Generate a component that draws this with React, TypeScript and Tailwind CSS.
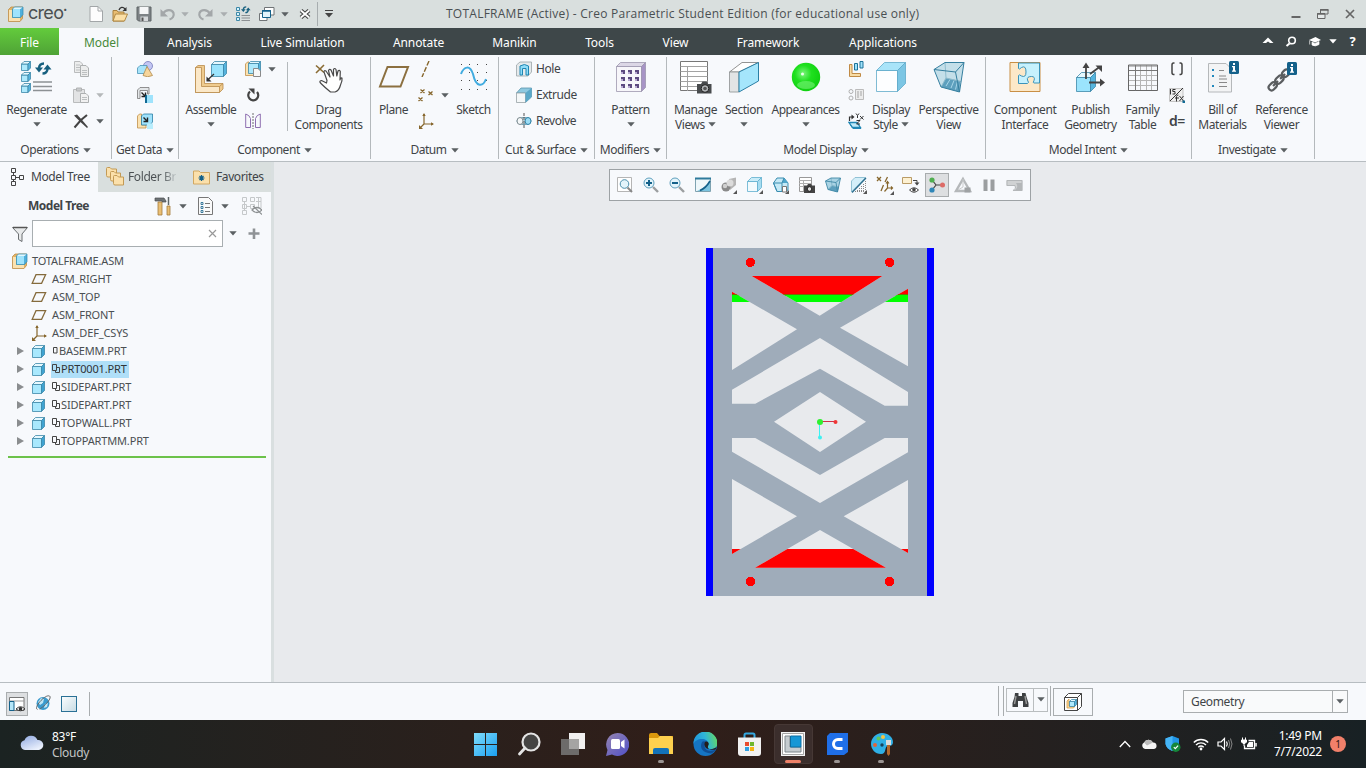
import React from "react";

type Kids = { children?: React.ReactNode };

/* ---------- drawing helpers ---------- */

function Ic({ w = 16, h, children }: { w?: number; h?: number } & Kids) {
  return (
    <svg className="block shrink-0" width={w} height={h ?? w} viewBox={`0 0 ${w} ${h ?? w}`} fill="none">
      {children}
    </svg>
  );
}

type CubeProps = { x?: number; y?: number; s?: number; d?: number; front?: string; top?: string; side?: string; line?: string };
function Cube({ x = 0, y = 0, s = 16, d, front = "#aee9fc", top = "#e6f8fe", side = "#55b4de", line = "#3c88a8" }: CubeProps) {
  const k = d ?? s * 0.25;
  const a = x + 0.5;
  const b = y + 0.5;
  const e = s - 1;
  return (
    <g stroke={line} strokeWidth="0.8" strokeLinejoin="round">
      <path d={`M${a} ${b + k}H${a + e - k}V${b + e}H${a}Z`} fill={front} />
      <path d={`M${a} ${b + k}L${a + k} ${b}H${a + e}L${a + e - k} ${b + k}Z`} fill={top} />
      <path d={`M${a + e - k} ${b + k}L${a + e} ${b}V${b + e - k}L${a + e - k} ${b + e}Z`} fill={side} />
    </g>
  );
}

function Caret({ c = "#5b6063" }: { c?: string }) {
  return (
    <svg className="block shrink-0" width="8" height="5" viewBox="0 0 8 5">
      <path d="M0.300 0.300H7.700L4 4.600Z" fill={c} />
    </svg>
  );
}

function Tick({ x = 13, y = 13 }: { x?: number; y?: number }) {
  return <path d={`M${x + 4} ${y}V${y + 4}H${x}Z`} fill="#555" />;
}

function AsmIcon() {
  return (
    <Ic>
      <path d="M0.500 3.500L3 1H14.500V12.500L12 15.500H0.500Z" fill="#e2b264" stroke="#c08f4a" strokeWidth="0.800" />
      <path d="M1 4H4V11.500H12V15H1Z" fill="#fbe2b0" />
      <path d="M4.500 3L6.500 1H15V8.500L12.500 11.500H4.500Z" fill="#4fb0dc" />
      <path d="M4.500 3H12V11.500H4.500Z" fill="#9fe3fc" />
      <path d="M4.500 3L6.500 1H15L12.500 3Z" fill="#e2f7fd" />
      <path d="M4.500 3L6.500 1H15V8.500L12.500 11.500H4.500Z" stroke="#2e86ad" strokeWidth="0.700" />
    </Ic>
  );
}

function Sync({ x = 0, y = 0, k = 1 }: { x?: number; y?: number; k?: number }) {
  return (
    <g transform={`translate(${x} ${y}) scale(${k})`}>
      <path d="M4 6.500C4 3 6 1.500 9 1.500" stroke="#17607f" strokeWidth="2.400" />
      <path d="M0 5.500H8L4 10.500Z" fill="#17607f" />
      <path d="M12.500 6.500C12.500 10 10.500 11.500 7.500 11.500" stroke="#17607f" strokeWidth="2.400" />
      <path d="M8.500 7.500H16.500L12.500 2.500Z" fill="#17607f" />
    </g>
  );
}

function InfoBadge({ x, y }: { x: number; y: number }) {
  return (
    <g>
      <rect x={x} y={y} width="10" height="13" rx="1.500" fill="#14618a" />
      <path d={`M${x + 4} ${y + 2}h2v2h-2zM${x + 3} ${y + 5}h3v4.500h1v1.200h-4v-1.200h1v-3.200h-1z`} fill="#fff" />
    </g>
  );
}

function Csys() {
  return (
    <Ic>
      <path d="M6 1V11H15M6 11L2 15" stroke="#86662c" strokeWidth="1.200" />
      <path d="M4.300 3L6 0L7.700 3ZM13 9.300L16 11L13 12.700ZM1 12V16H5Z" fill="#86662c" />
    </Ic>
  );
}

function PlaneSmall() {
  return (
    <Ic>
      <path d="M5 3.700H14.600L10.600 12.300H1.200Z" stroke="#856b3c" strokeWidth="1.300" />
    </Ic>
  );
}

function TurnArrow({ flip }: { flip?: boolean }) {
  return (
    <Ic>
      <g transform={flip ? "translate(16 0) scale(-1 1)" : undefined}>
        <path d="M3 7.500C6 3 12 3 13.500 7C14.500 10 12.500 12.500 9.500 13.500" stroke="#a3a7a9" strokeWidth="2.200" />
        <path d="M0.500 3V10.500H8Z" fill="#a3a7a9" />
      </g>
    </Ic>
  );
}

/* ---------- ribbon parts ---------- */

function Group({ cls, label, children }: { cls: string; label: string } & Kids) {
  return (
    <div className={`flex h-[106px] shrink-0 ${cls}`}>
      <div className="flex min-w-0 grow flex-col">
        <div className="flex h-[86px]">{children}</div>
        <div className="flex h-[18px] items-center justify-center gap-[4px] whitespace-nowrap">
          <span>{label}</span>
          <Caret />
        </div>
      </div>
      <div className="mt-[2px] h-[102px] w-px shrink-0 bg-[#b4b9bc]" />
    </div>
  );
}

function Big({ cls, lines, drop, icon }: { cls: string; lines: string[]; drop?: "below" | "inline"; icon: React.ReactNode }) {
  return (
    <div className={`flex shrink-0 flex-col items-center pt-[6px] ${cls}`}>
      <div className="flex h-[41px] items-start justify-center">{icon}</div>
      {lines.map((l, i) => (
        <div key={l} className="flex h-[15px] items-center gap-[3px] leading-[15px] whitespace-nowrap">
          <span>{l}</span>
          {drop === "inline" && i === lines.length - 1 && <Caret />}
        </div>
      ))}
      {drop === "below" && (
        <div className="flex h-[15px] items-center">
          <Caret />
        </div>
      )}
    </div>
  );
}

function Stack({ cls, children }: { cls: string } & Kids) {
  return <div className={`flex shrink-0 flex-col gap-[10px] pt-[6px] ${cls}`}>{children}</div>;
}

function Ribbon() {
  return (
    <div className="flex h-[107px] border-b border-[#b7bdc1] bg-[#f7f9fc]">
      <Group cls="w-[112px]" label="Operations">
        <Big
          cls="w-[73px]"
          lines={["Regenerate"]}
          drop="below"
          icon={
            <Ic w={32}>
              <Cube x={0} y={0} s={10} />
              <Cube x={0} y={11} s={10} />
              <Cube x={0} y={22} s={10} />
              <Sync x={14} y={1} />
              <path d="M12 21H31M12 25.500H31M12 29.500H31" stroke="#8d9194" strokeWidth="1.400" />
            </Ic>
          }
        />
        <Stack cls="w-[38px]">
          <Ic>
            <path d="M1.500 0.500H7L9.500 3V11.500H1.500Z" fill="#eceded" stroke="#b9bbbc" />
            <path d="M7.500 4.500H13L15.500 7V15.500H7.500Z" fill="#eceded" stroke="#adb0b1" />
            <path d="M3 4H7M3 6.500H7M3 9H7M9 9.500H14M9 11.500H14M9 13.500H14" stroke="#bcbfc0" />
          </Ic>
          <div className="flex items-center gap-[7px]">
            <Ic>
              <path d="M0.500 2.500H11.500V15.500H0.500Z" fill="#e2e3e4" stroke="#b9bbbc" />
              <path d="M3.500 1H8.500V4H3.500Z" fill="#c9cbcc" stroke="#b0b2b3" />
              <path d="M7.500 6.500H13L15.500 9V15.500H7.500Z" fill="#f1f1f1" stroke="#adb0b1" />
              <path d="M9 10.500H14M9 12.500H14" stroke="#bcbfc0" />
            </Ic>
            <Caret c="#b5b8ba" />
          </div>
          <div className="flex items-center gap-[7px]">
            <Ic>
              <path d="M1 2.500L4 1.500L9.500 7.500L15 14L14 15L8 9.500Z" fill="#444" />
              <path d="M14 2L8 7L1.500 14.500" stroke="#444" strokeWidth="2" />
            </Ic>
            <Caret />
          </div>
        </Stack>
      </Group>

      <Group cls="w-[67px]" label="Get Data">
        <Stack cls="w-[66px] items-center">
          <Ic>
            <circle cx="11" cy="5" r="4.500" fill="#c3c6f3" stroke="#8b8fc6" />
            <path d="M0.500 7L3 4.500H10V10L8 12.500H0.500Z" fill="#a8e4fa" stroke="#4a94b8" strokeWidth="0.800" />
            <path d="M10 5.500L6 14.500Q10.500 17 15.500 14.500Z" fill="#f6d59b" stroke="#b08a4d" strokeWidth="0.800" />
          </Ic>
          <Ic>
            <path d="M0.500 3L3 0.500H12V7H10.500V3.500H3V11.500H0.500Z" fill="#e3e6e8" stroke="#777" strokeWidth="0.800" />
            <path d="M4.500 5.500L8 9M8.500 5.500V9.500H4.500" stroke="#222" strokeWidth="1.400" />
            <path d="M10 8H16V16H10Z" fill="#9fe3fc" />
            <path d="M8 9L10 7.500V16H8Z" fill="#126a94" />
          </Ic>
          <Ic>
            <path d="M0.500 3L2.500 1H4.500V12H9V15H0.500Z" fill="#fbe2b0" stroke="#c08f4a" strokeWidth="0.800" />
            <path d="M4.500 3L6.500 1H15.500V9L13 12H4.500Z" fill="#9fe2fb" stroke="#2b7fa5" strokeWidth="0.800" />
            <path d="M6.500 4.500L10 8M10.500 4.500V8.500H6.500" stroke="#222" strokeWidth="1.400" />
            <path d="M10 10.500H16V16H10Z" fill="#b8edfc" />
          </Ic>
        </Stack>
      </Group>

      <Group cls="w-[192px]" label="Component">
        <Big
          cls="w-[64px]"
          lines={["Assemble"]}
          drop="below"
          icon={
            <Ic w={32}>
              <path d="M0.500 6.500L3 4.500H9.500V22.500H28V28L24.500 31.500H0.500Z" fill="#efcb8e" stroke="#b98c4b" strokeWidth="0.800" />
              <path d="M0.500 6.500H6.500V25.500H24.500V31.500H0.500Z" fill="#fbe8c8" stroke="#b98c4b" strokeWidth="0.800" />
              <path d="M24.500 25.500L28 22.500" stroke="#b98c4b" strokeWidth="0.800" />
              <Cube x={16} y={0} s={16} d={3} front="#9be4fd" />
              <path d="M19 13L12 19.500" stroke="#333" strokeWidth="1.200" />
              <path d="M11.500 15.500V20.500H16.500Z" fill="#333" />
            </Ic>
          }
        />
        <Stack cls="w-[44px] pl-[2px]">
          <div className="flex items-center gap-[7px]">
            <Ic>
              <path d="M0.500 3L2.500 1H4V11H9V14.500H0.500Z" fill="#fbe2b0" stroke="#c08f4a" strokeWidth="0.800" />
              <Cube x={3} y={0} s={13} d={2} />
              <path d="M8.500 7.500H13L15.500 10V15.500H8.500Z" fill="#f7f7f7" stroke="#8a8a8a" />
            </Ic>
            <Caret />
          </div>
          <Ic>
            <path d="M5 4.500A5 5 0 1 0 12 5" stroke="#444" strokeWidth="2.200" />
            <path d="M3.500 1.500H9.500V7.500Z" fill="#444" />
          </Ic>
          <Ic>
            <path d="M0.700 1V14.500H5.500V5.500Q4.500 2 0.700 1ZM15.300 1V14.500H10.500V5.500Q11.500 2 15.300 1Z" stroke="#8e6fb0" />
            <path d="M8 0V16" stroke="#6c6c6c" strokeDasharray="2 1" />
          </Ic>
        </Stack>
        <div className="mt-[7px] h-[69px] w-px bg-[#b4b9bc]" />
        <Big
          cls="w-[81px]"
          lines={["Drag", "Components"]}
          icon={
            <Ic w={32}>
              <path d="M3 4.500L11 11.500M11 4L3 12" stroke="#8a6c34" strokeWidth="1.600" />
              <path
                d="M11 11Q11 9 13 10L17 16L15.500 9.500Q16.500 7.500 18 9L20.500 15V8.500Q21.500 6.500 23 8.500L23.800 15L25 10Q26.500 8.500 27.300 10.500L27 19Q27.500 16.500 29 17Q29.500 20 27.500 24Q26 30 22 31H17.500Q12.500 27 8 22.500Q5.500 20 8.500 19.500L13.500 22L14 19.500Z"
                fill="#fff"
                stroke="#4a4a4a"
                strokeWidth="1.200"
                strokeLinejoin="round"
              />
            </Ic>
          }
        />
      </Group>

      <Group cls="w-[128px]" label="Datum">
        <Big
          cls="w-[45px]"
          lines={["Plane"]}
          icon={
            <Ic w={32}>
              <path d="M9.500 6H30L22.500 25.500H2Z" stroke="#8c7040" strokeWidth="2" />
            </Ic>
          }
        />
        <Stack cls="w-[37px] pl-[2px]">
          <Ic>
            <path d="M11 0L4 16" stroke="#86662c" strokeWidth="1.400" strokeDasharray="5 1.700" />
          </Ic>
          <div className="flex items-center gap-[7px]">
            <Ic>
              <path d="M2.500 2.500l4 3.500M6.500 2.500l-4 3.500M10.500 4.500l4 3.500M14.500 4.500l-4 3.500M0.500 10.500l4 3.500M4.500 10.500l-4 3.500" stroke="#86662c" strokeWidth="1.300" />
            </Ic>
            <Caret />
          </div>
          <Csys />
        </Stack>
        <Big
          cls="w-[41px]"
          lines={["Sketch"]}
          icon={
            <Ic w={32}>
              {[3, 11, 19, 28].map((y) =>
                [3, 11, 19, 28].map((x) => <rect key={`${x}-${y}`} x={x} y={y} width="1" height="1" fill="#444" />)
              )}
              <path d="M3 13C6 5 12 4 15 13C18 27 25 26 28 18" stroke="#41ace0" strokeWidth="2" />
            </Ic>
          }
        />
      </Group>

      <Group cls="w-[96px]" label="Cut & Surface">
        <div className="flex flex-col gap-[10px] pt-[6px] pl-[17px]">
          <div className="flex h-[16px] items-center gap-[4px]">
            <Ic>
              <path d="M0.500 4L4 1H15.500V11L12 15H0.500Z" fill="#e5eaec" stroke="#9aa4a8" strokeWidth="0.800" />
              <path d="M4 5V14H6.500V7.500H10V14H12.500V5Q8.500 2 4 5Z" fill="#8fdcf8" stroke="#1e86b3" />
            </Ic>
            <span>Hole</span>
          </div>
          <div className="flex h-[16px] items-center gap-[4px]">
            <Ic>
              <path d="M0.500 6L5 1H15.500V10L9.500 15.500V6Z" fill="#8ec9e0" stroke="#5b95ac" strokeWidth="0.800" />
              <path d="M0.500 6H9.500V15.500H0.500Z" fill="#f4f7f8" stroke="#98a2a6" strokeWidth="0.800" />
              <path d="M9.500 6L15.500 1V10L9.500 15.500Z" fill="#5aa8c8" />
            </Ic>
            <span>Extrude</span>
          </div>
          <div className="flex h-[16px] items-center gap-[4px]">
            <Ic>
              <ellipse cx="8" cy="8" rx="7" ry="3.500" fill="#d7edf5" stroke="#6c99ab" />
              <ellipse cx="4" cy="8" rx="3" ry="3.500" fill="#f4f7f8" stroke="#7d8b90" />
              <ellipse cx="12" cy="8" rx="3" ry="3.500" fill="#9bdcf4" stroke="#2b7fa5" />
              <path d="M8 0V16" stroke="#555" strokeDasharray="3 1" />
            </Ic>
            <span>Revolve</span>
          </div>
        </div>
      </Group>

      <Group cls="w-[72px]" label="Modifiers">
        <Big
          cls="w-[71px]"
          lines={["Pattern"]}
          drop="below"
          icon={
            <Ic w={32}>
              <Cube x={1} y={1} s={30} d={4} front="#f7f6fa" top="#dcd7e6" side="#a794c6" line="#9d97ae" />
              {[9, 16, 23].map((y) =>
                [6, 13, 20].map((x) => (
                  <g key={`${x}-${y}`}>
                    <rect x={x} y={y} width="4" height="4" fill="#5d4a80" />
                    <rect x={x} y={y + 2} width="2" height="2" fill="#b9abd2" />
                  </g>
                ))
              )}
            </Ic>
          }
        />
      </Group>

      <Group cls="w-[319px]" label="Model Display">
        <Big
          cls="w-[57px]"
          lines={["Manage", "Views"]}
          drop="inline"
          icon={
            <Ic w={34} h={34}>
              <path d="M1.500 0.500H28.500V29.500H1.500Z" fill="#fff" stroke="#777" />
              <path d="M1.500 5.500H28.500M1.500 10.500H28.500M1.500 15.500H28.500M1.500 20.500H28.500M1.500 25.500H28.500M8.500 5V30" stroke="#a3a3a3" />
              <path d="M18 23H22L23.500 20.500H27.500L29 23H32.500V32.500H18Z" fill="#484b4d" />
              <circle cx="26" cy="27.500" r="3.800" fill="#b5b8ba" stroke="#222" />
              <circle cx="26" cy="27.500" r="1.800" fill="#555" />
            </Ic>
          }
        />
        <Big
          cls="w-[40px]"
          lines={["Section"]}
          drop="below"
          icon={
            <Ic w={32}>
              <path d="M1.500 11L14 1.500H30.500L11 11Z" fill="#fff" stroke="#777" strokeWidth="0.800" />
              <path d="M1.500 11H11V31H1.500Z" fill="#e2e4e5" stroke="#8b8f91" strokeWidth="0.800" />
              <path d="M11 11L30.500 1.500V20L11 31Z" fill="#a5e6fc" stroke="#2b7fa5" />
            </Ic>
          }
        />
        <Big
          cls="w-[83px]"
          lines={["Appearances"]}
          drop="below"
          icon={
            <Ic w={32}>
              <defs>
                <radialGradient id="ball" cx="0.400" cy="0.380" r="0.650">
                  <stop offset="0" stopColor="#7bf57b" />
                  <stop offset="0.450" stopColor="#1fe01f" />
                  <stop offset="1" stopColor="#0fd00f" />
                </radialGradient>
              </defs>
              <circle cx="16" cy="16" r="14.200" fill="url(#ball)" />
              <ellipse cx="16" cy="24" rx="9" ry="4" fill="#8cf78c" opacity="0.500" />
              <circle cx="12.500" cy="13" r="1.500" fill="#eaffea" />
            </Ic>
          }
        />
        <Stack cls="w-[18px] pl-[1px]">
          <Ic>
            <path d="M1.500 3.500H4V12.500H12.500V15.500H1.500Z" fill="#f8dca5" stroke="#c08a45" />
            <path d="M6.500 2.500H9.500V9H6.500ZM12 0.500H15V7H12Z" fill="#9fe2fb" stroke="#1e7399" />
          </Ic>
          <Ic>
            <path d="M7.500 2.500H15.500V12.500H7.500Z" fill="#ececec" stroke="#bbb" />
            <path d="M9 4H11V11H9ZM12 4H14V9H12Z" fill="#c9c9c9" />
            <circle cx="3" cy="4.500" r="2" stroke="#b0b0b0" />
            <circle cx="3" cy="11" r="2" stroke="#b0b0b0" />
          </Ic>
          <Ic>
            <path d="M1 9.500H9L12.500 14.500H4.500Z" fill="#bfeafa" stroke="#2087b5" strokeWidth="1.300" />
            <path d="M2.500 12L5 15.500H13" stroke="#2087b5" />
            <path d="M1.500 8V4H4" stroke="#333" strokeWidth="1.200" />
            <path d="M3.500 1.500L6.500 4L3.500 6.500Z" fill="#333" />
            <path d="M8 0.500L9.500 2.500L11 0.500M9.500 2.500V5M12 3L15.500 6.500M15.500 3L12 6.500M8.500 7.500H12L8.500 11H12" stroke="#333" />
          </Ic>
        </Stack>
        <Big
          cls="w-[52px]"
          lines={["Display", "Style"]}
          drop="inline"
          icon={
            <Ic w={32}>
              <Cube x={1} y={1} s={30} d={8} front="#fdfeff" top="#a9e4f9" side="#7cc6e4" line="#5fa9c9" />
            </Ic>
          }
        />
        <Big
          cls="w-[63px]"
          lines={["Perspective", "View"]}
          icon={
            <Ic w={32}>
              <path d="M1 8.500L12 1.500H31L26.500 31L8 26Z" fill="#c4dfe9" />
              <path d="M8 26L13 17L27 20L26.500 31Z" fill="#5d9fbd" />
              <path d="M13 25L17 18.500M18 27L21 19.500M22.500 28.500L24.500 20" stroke="#a8d6e8" />
              <path d="M12 1.500L13 17L8 26M13 17L28 20.500" stroke="#8fbccd" />
              <path d="M1 8.500L12 1.500H31L26.500 31L8 26ZM1 8.500L22.500 11L31 1.500M22.500 11L26.500 31" stroke="#357f9f" />
            </Ic>
          }
        />
      </Group>

      <Group cls="w-[206px]" label="Model Intent">
        <Big
          cls="w-[78px]"
          lines={["Component", "Interface"]}
          icon={
            <Ic w={32}>
              <path d="M1 1.500H31V30.500H1Z" fill="#fce8c8" stroke="#c98f45" />
              <path
                d="M9.500 2H30.500V22H25Q23.500 22 25 19.500Q26.500 15.500 22.500 15.500Q17.500 15.500 18.500 19Q20.500 22 18.500 22.500H9.500V14.500Q10 13 12.500 15Q17 17 17 11Q17 4 12.500 6.500Q10 9 9.500 7.500Z"
                fill="#c6f1fd"
                stroke="#3a93ba"
              />
            </Ic>
          }
        />
        <Big
          cls="w-[53px]"
          lines={["Publish", "Geometry"]}
          icon={
            <Ic w={32}>
              <Cube x={1} y={11} s={20} d={5} front="#9be4fd" />
              <path d="M11 18V5M15 13L24.500 6M14 21.500H27" stroke="#444" strokeWidth="1.800" />
              <path d="M7.500 7L11 1.500L14.500 7ZM20.500 4.500H27V11ZM25 17.500L30 21.500L25 25.500Z" fill="#444" />
            </Ic>
          }
        />
        <Big
          cls="w-[51px]"
          lines={["Family", "Table"]}
          icon={
            <Ic w={32}>
              <path d="M2 14.500H30M2 19.500H30M2 24.500H30M13.500 4V29.500M19.500 4V29.500M24.500 4V29.500" stroke="#b5b5b5" />
              <path d="M1.500 4H30.500V29.500H1.500Z" stroke="#666" />
              <path d="M2 5H30" stroke="#888" />
              <path d="M2 9.500H30M8.500 4V29.500" stroke="#777" />
            </Ic>
          }
        />
        <Stack cls="w-[23px] pl-[1px]">
          <Ic>
            <path d="M5.500 2H4.500Q3 2 3 4V11.500Q3 13.500 4.500 13.500H5.500M10.500 2H11.500Q13 2 13 4V11.500Q13 13.500 11.500 13.500H10.500" stroke="#444" strokeWidth="1.500" />
          </Ic>
          <Ic>
            <path d="M0.500 1.500H14V14.500H0.500Z" fill="#eee" stroke="#c5c5c5" />
            <path d="M1.500 2V7.500M6.500 2.500H3.800V4.500H6V7H3.500M14 1L1 14M7.500 14.500V9.500Q7.500 8 9.500 8M6 11H10M10.500 9L14.500 14M14.500 9L10.500 14" stroke="#333" />
            <path d="M13.500 13.500H16V16H13.500Z" fill="#126a94" />
          </Ic>
          <div className="flex h-[16px] w-[16px] items-center text-[14px] leading-[16px] font-semibold tracking-[-0.500px]">d=</div>
        </Stack>
      </Group>

      <Group cls="w-[123px]" label="Investigate">
        <Big
          cls="w-[61px]"
          lines={["Bill of", "Materials"]}
          icon={
            <Ic w={32}>
              <path d="M1.500 2.500H19L24.500 8V31H1.500Z" fill="#f3f4f5" stroke="#b5b8ba" />
              <path d="M12 9.500H17M12 15H19M12 18H20M12 21.500H20M12 25.500H20" stroke="#888" />
              <path d="M5 8h2v2h-2zM5 14h2v2h-2zM5 24h2v2h-2z" fill="#2188bd" />
              <InfoBadge x={22} y={0} />
            </Ic>
          }
        />
        <Big
          cls="w-[57px]"
          lines={["Reference", "Viewer"]}
          icon={
            <Ic w={32}>
              <g stroke="#5a5d5f" strokeWidth="2.200" transform="rotate(-45 12 20)">
                <rect x="0" y="17" width="9" height="6" rx="3" />
                <rect x="9.500" y="17" width="9" height="6" rx="3" />
                <rect x="19" y="17" width="8" height="6" rx="3" />
                <path d="M5 20H12M15 20H22" />
              </g>
              <InfoBadge x={21} y={1} />
            </Ic>
          }
        />
      </Group>
    </div>
  );
}

/* ---------- title bar and tabs ---------- */

function Slot({ cls, children }: { cls: string } & Kids) {
  return <div className={`flex shrink-0 items-center justify-center ${cls}`}>{children}</div>;
}

function TitleBar() {
  return (
    <div className="flex h-[28px] items-center bg-[#d9dfde] pl-[6px]">
      <Slot cls="w-[20px]">
        <AsmIcon />
      </Slot>
      <div className="w-[57px] pb-[3px] pl-[2px] font-['Inter'] text-[18px] leading-[20px] tracking-[-0.7px] text-[#4b4f51]">
        creo<span className="align-top text-[7px] leading-[14px]">•</span>
      </div>
      <Slot cls="w-[25px]">
        <Ic>
          <path d="M2 0.500H10L14.500 5V15.500H2Z" fill="#fdfdfd" stroke="#a2a6a8" />
          <path d="M10 0.500V5H14.500" stroke="#a2a6a8" />
        </Ic>
      </Slot>
      <Slot cls="w-[23px]">
        <Ic>
          <path d="M1 4.500H5L6 6H12V15H1Z" fill="#e9bd72" stroke="#a9803e" />
          <path d="M3.500 8H15.500L12.500 15H1Z" fill="#fbdfa6" stroke="#b08843" />
          <path d="M7 4C8 1 11 0.500 13 3" stroke="#333" strokeWidth="1.300" />
          <path d="M14.500 1V5H10.500Z" fill="#333" />
        </Ic>
      </Slot>
      <Slot cls="w-[25px]">
        <Ic>
          <path d="M1 1H15V15H2.500L1 13.500Z" fill="#7d8285" stroke="#5f6467" />
          <path d="M3.500 1H12.500V8H3.500Z" fill="#f5f6f7" />
          <path d="M4.500 10.500H12V15H4.500Z" fill="#d5d8da" />
          <path d="M5.500 11.500H7.500V15H5.500Z" fill="#555" />
        </Ic>
      </Slot>
      <Slot cls="w-[24px]">
        <TurnArrow />
      </Slot>
      <Slot cls="w-[10px]">
        <Caret c="#aaaeb0" />
      </Slot>
      <Slot cls="w-[30px]">
        <TurnArrow flip />
      </Slot>
      <Slot cls="w-[7px]">
        <Caret c="#aaaeb0" />
      </Slot>
      <Slot cls="w-[31px]">
        <Ic>
          <path d="M1.500 1.500H4.500V4.500H1.500ZM1.500 6.500H4.500V9.500H1.500ZM1.500 11.500H4.500V14.500H1.500Z" fill="#d5f2fc" stroke="#3c88a8" />
          <Sync x={6} y={0} k={0.580} />
          <path d="M6.500 9.500H15M6.500 12H15M6.500 14.500H15" stroke="#8c9093" />
        </Ic>
      </Slot>
      <Slot cls="w-[18px]">
        <Ic>
          <path d="M5.500 1.500H15V9H5.500Z" fill="#fff" stroke="#707477" />
          <path d="M0.500 7.500H8V14.500H0.500Z" fill="#fff" stroke="#707477" />
          <path d="M3.500 4.500H11.500V11.500H3.500Z" fill="#e2f3fa" stroke="#14618a" />
          <path d="M3 5H12" stroke="#14618a" strokeWidth="1.500" />
        </Ic>
      </Slot>
      <Slot cls="w-[18px]">
        <Caret />
      </Slot>
      <Slot cls="w-[22px]">
        <Ic w={12}>
          <path d="M2 2.500L10 9.500M10 2.500L2 9.500" stroke="#444" strokeWidth="4" />
          <path d="M2 2.500L10 9.500M10 2.500L2 9.500" stroke="#fff" strokeWidth="1.800" />
        </Ic>
      </Slot>
      <div className="ml-px h-[24px] w-px bg-[#a7adaf]" />
      <Slot cls="w-[22px]">
        <Ic w={8} h={8}>
          <path d="M0 0.500H8" stroke="#444" />
          <path d="M0 3H8L4 7.500Z" fill="#444" />
        </Ic>
      </Slot>
      <div className="ml-[106px] grow font-['Open_Sans'] text-[12px] tracking-[0.250px] whitespace-nowrap text-[#4a4f52]">
        TOTALFRAME (Active) - Creo Parametric Student Edition (for educational use only)
      </div>
      <Slot cls="w-[27px]">
        <Ic w={10}>
          <path d="M0.500 8H9.500" stroke="#666" strokeWidth="2" />
        </Ic>
      </Slot>
      <Slot cls="w-[27px]">
        <Ic w={12} h={12}>
          <path d="M3.500 5V1.500H11V6H9" stroke="#666" />
          <path d="M3 2H11.500" stroke="#666" strokeWidth="1.500" />
          <path d="M0.500 5.500H8V10.500H0.500Z" fill="#e5e9e9" stroke="#666" />
          <path d="M0 6H8.500" stroke="#666" strokeWidth="1.500" />
        </Ic>
      </Slot>
      <Slot cls="mr-[3px] w-[27px]">
        <Ic w={10}>
          <path d="M1 1L9 9M9 1L1 9" stroke="#666" strokeWidth="1.700" />
        </Ic>
      </Slot>
    </div>
  );
}

const TABS: [string, string][] = [
  ["Analysis", "w-[91px]"],
  ["Live Simulation", "w-[135px]"],
  ["Annotate", "w-[97px]"],
  ["Manikin", "w-[95px]"],
  ["Tools", "w-[75px]"],
  ["View", "w-[77px]"],
  ["Framework", "w-[108px]"],
  ["Applications", "w-[122px]"],
];

function TabBar() {
  return (
    <div className="flex h-[27px] items-center bg-[#3e4749] text-[12px] tracking-[-0.100px] text-white">
      <Slot cls="h-full w-[59px] bg-linear-to-b from-[#63cb3c] to-[#4fa336] pt-[2px]">File</Slot>
      <Slot cls="h-full w-[85px] bg-[#f7f9fc] pt-[2px] text-[#47893a]">Model</Slot>
      {TABS.map(([name, w]) => (
        <Slot key={name} cls={`h-full pt-[2px] ${w}`}>
          <span className="whitespace-nowrap">{name}</span>
        </Slot>
      ))}
      <div className="grow" />
      <Slot cls="w-[22px] pb-[4px]">
        <Ic w={12} h={8}>
          <path d="M0.500 7L6 1.500L11.500 7H8L6 5.500L4 7Z" fill="#fff" />
        </Ic>
      </Slot>
      <Slot cls="w-[23px]">
        <Ic w={12} h={12}>
          <circle cx="7" cy="4.500" r="3.300" stroke="#fff" strokeWidth="1.600" />
          <path d="M4.500 7.500L1.500 10" stroke="#fff" strokeWidth="2" />
        </Ic>
      </Slot>
      <Slot cls="w-[25px]">
        <Ic w={12} h={12}>
          <path d="M0 4L6.500 1L12 4L6 6.500Z" fill="#fff" />
          <path d="M3 6V9Q6 11 10 8.500V5.500L6 7.500ZM0.700 4.500V8.500" fill="#fff" stroke="#fff" strokeWidth="0.700" />
        </Ic>
      </Slot>
      <Slot cls="w-[12px]">
        <Caret c="#fff" />
      </Slot>
      <Slot cls="w-[27px] pb-[2px] text-[13px] font-bold">?</Slot>
    </div>
  );
}

/* ---------- model tree panel ---------- */

function LinkMark({ single }: { single?: boolean }) {
  return (
    <svg className="block shrink-0" width={single ? 7 : 9} height="10" viewBox={`0 0 ${single ? 7 : 9} 10`} fill="none">
      {single ? (
        <path d="M1.500 1.500H5V7H1.500Z" stroke="#444" />
      ) : (
        <path d="M0.500 0.500H4.500V6.500H0.500ZM5 3.500H7.500V8.500H3.500V6.500" stroke="#444" />
      )}
    </svg>
  );
}

function TreePart({ name, single, sel }: { name: string; single?: boolean; sel?: boolean }) {
  return (
    <div className="flex h-[18px] items-center pl-[17px]">
      <svg className="block" width="7" height="8" viewBox="0 0 7 8">
        <path d="M0 0L7 4L0 8Z" fill="#8a8d8f" />
      </svg>
      <div className="ml-[7px]">
        <Ic>
          <Cube x={1} y={2} s={13} d={3} front="#a9e8fd" side="#3fa3d1" />
        </Ic>
      </div>
      <div className={`ml-[4px] flex h-[17px] items-center pr-[2px] pl-px ${sel ? "bg-[#afdff8] text-[#2f3437]" : ""}`}>
        <LinkMark single={single} />
        <span>{name}</span>
      </div>
    </div>
  );
}

function TreePanel() {
  return (
    <div className="flex w-[274px] shrink-0 flex-col border-r-[3px] border-[#d9dfe0] bg-[#f7f9fc] tracking-[-0.400px]">
      <div className="flex h-[30px] bg-[#d9dfde] whitespace-nowrap">
        <div className="flex w-[98px] items-center bg-[#f7f9fc] pl-[10px]">
          <Ic w={16} h={20}>
            <path d="M1.500 1.500H5.500V5.500H1.500ZM1.500 8.500H5.500V12.500H1.500ZM1.500 14.500H5.500V18.500H1.500ZM9.500 8.500H13.500V12.500H9.500ZM3.500 5.500V8.500M3.500 12.500V14.500M5.500 10.500H9.500" stroke="#444" />
          </Ic>
          <span className="ml-[5px]">Model Tree</span>
        </div>
        <div className="flex w-[87px] items-center pl-[8px]">
          <Ic w={20} h={20}>
            {[0, 4, 7].map((o, i) => (
              <path key={o} transform={`translate(${o} ${i * 4})`} d="M0.500 1.500Q0.500 0.500 1.500 0.500H4L5.500 2H10.500V10H2Q0.500 10 0.500 8.500Z" fill="#fbe0ab" stroke="#c39a55" />
            ))}
          </Ic>
          <span className="ml-[2px] w-[48px] overflow-hidden bg-linear-to-r from-[#4a4f52] from-70% to-[#c4cacb] bg-clip-text text-transparent">Folder Br</span>
        </div>
        <div className="flex items-center pl-[8px]">
          <Ic w={17} h={16}>
            <path d="M0.500 2H6L7.500 3.500H16.500V15H0.500Z" fill="#fbe0ab" stroke="#d2a862" />
            <path d="M8.500 6V12M5.500 9H11.500M6.500 7L10.500 11M10.500 7L6.500 11" stroke="#14618a" strokeWidth="1.200" />
          </Ic>
          <span className="ml-[6px]">Favorites</span>
        </div>
      </div>
      <div className="flex h-[28px] items-center">
        <div className="w-[126px] pl-[28px] font-bold tracking-[-0.500px]">Model Tree</div>
        <div className="flex w-[100px] items-center pl-[28px]">
          <Ic w={18} h={20}>
            <path d="M1 2H10L12 5V6H8V5H1Z" fill="#6d7275" stroke="#4a4f52" strokeWidth="0.700" />
            <path d="M4 6H8V19H4Z" fill="#eabf74" stroke="#a37c3c" strokeWidth="0.800" />
            <path d="M14.500 1V9" stroke="#5d6568" strokeWidth="1.500" />
            <path d="M13 10H16V19H13Z" fill="#eabf74" stroke="#a37c3c" strokeWidth="0.800" />
          </Ic>
          <div className="ml-[7px]">
            <Caret />
          </div>
          <div className="ml-[10px]">
            <Ic w={18} h={20}>
              <path d="M1.500 1.500H11.500L15.500 5.500V18.500H1.500Z" fill="#fafafa" stroke="#777" />
              <path d="M8 7.500H13M8 11.500H13M8 15.500H13" stroke="#777" />
              <path d="M4 6.500H6V8.500H4ZM4 10.500H6V12.500H4ZM4 14.500H6V16.500H4Z" stroke="#14618a" strokeWidth="0.800" />
            </Ic>
          </div>
        </div>
        <div className="-ml-[5px]">
          <Caret />
        </div>
        <div className="ml-[13px]">
          <Ic w={20} h={20}>
            <path d="M0.500 1.500H4.500V5.500H0.500ZM0.500 8.500H4.500V12.500H0.500ZM0.500 14.500H4.500V18.500H0.500ZM2.500 5.500V14.500M4.500 10.500H8.500M8.500 1.500H12.500V5.500H8.500ZM8.500 8.500H12.500V12.500H8.500ZM14 1.500H19M14 5.500H19M16.500 2V12M19 1.500V12" stroke="#c5c8ca" />
            <path d="M10 14Q15 9 20 14Q15 19 10 14ZM11 10L20 18.500" stroke="#8c9092" strokeWidth="1.200" />
          </Ic>
        </div>
      </div>
      <div className="flex h-[27px] items-center pl-[12px]">
        <Ic w={16} h={16}>
          <path d="M0.500 1.500H15.500L10 8V15.500L6.500 13.500V8Z" fill="#e8eaeb" stroke="#6a6e70" />
          <path d="M1 1.500H15" stroke="#555" strokeWidth="1.500" />
        </Ic>
        <div className="ml-[4px] flex h-[27px] w-[191px] items-center justify-end border border-[#a8aeb1] bg-white pr-[5px]">
          <Ic w={9} h={9}>
            <path d="M1 1L8 8M8 1L1 8" stroke="#999" strokeWidth="1.200" />
          </Ic>
        </div>
        <div className="ml-[6px]">
          <Caret />
        </div>
        <div className="ml-[11px]">
          <Ic w={12} h={12}>
            <path d="M6 0.500V11M0.500 5.500H11.500" stroke="#8f9396" strokeWidth="2.600" />
          </Ic>
        </div>
      </div>
      <div className="mt-[5px] flex flex-col text-[11px] tracking-[-0.150px] text-[#4a4f52]">
        <div className="flex h-[18px] items-center gap-[4px] pl-[12px]">
          <AsmIcon />
          <span>TOTALFRAME.ASM</span>
        </div>
        {["ASM_RIGHT", "ASM_TOP", "ASM_FRONT"].map((n) => (
          <div key={n} className="flex h-[18px] items-center gap-[5px] pl-[31px]">
            <PlaneSmall />
            <span>{n}</span>
          </div>
        ))}
        <div className="flex h-[18px] items-center gap-[5px] pl-[31px]">
          <Csys />
          <span>ASM_DEF_CSYS</span>
        </div>
        <TreePart name="BASEMM.PRT" single />
        <TreePart name="PRT0001.PRT" sel />
        <TreePart name="SIDEPART.PRT" />
        <TreePart name="SIDEPART.PRT" />
        <TreePart name="TOPWALL.PRT" />
        <TreePart name="TOPPARTMM.PRT" />
      </div>
      <div className="mt-[6px] ml-[8px] h-[2px] w-[258px] bg-[#6cc24a]" />
    </div>
  );
}

/* ---------- graphics area ---------- */

function Lens({ sign }: { sign?: "plus" | "minus" }) {
  return (
    <>
      <circle cx="6" cy="6" r="5" fill="#e3f4fb" stroke="#5fa0bd" />
      <path d="M10 10L15 15" stroke="#9b9ea0" strokeWidth="2.400" />
      {sign && <path d="M3 6H9" stroke="#14618a" strokeWidth="2" />}
      {sign === "plus" && <path d="M6 3V9" stroke="#14618a" strokeWidth="2" />}
    </>
  );
}

function ViewToolbar() {
  const items: React.ReactNode[] = [
    <>
      <path d="M0.500 0.500H14.500V14.500H0.500Z" fill="#fff" stroke="#b5b5b5" />
      <circle cx="7.500" cy="7" r="4.300" fill="#e3f4fb" stroke="#4b8fad" />
      <path d="M10.500 10.500L15 15" stroke="#888" strokeWidth="2" />
    </>,
    <Lens sign="plus" />,
    <Lens sign="minus" />,
    <>
      <path d="M0.500 1.500H15.500V14.500H0.500Z" fill="#eef7fa" stroke="#7fa3b1" />
      <path d="M15 3V14H2Q11 11 15 3Z" fill="#7cc4e0" />
      <path d="M0 1.500H16" stroke="#2e7a9c" strokeWidth="2" />
      <path d="M15 4Q11 11 5 13.500" stroke="#14618a" strokeWidth="1.600" />
    </>,
    <>
      <path d="M8 2L15 0.500V8L9 13Z" fill="#b5b5b5" />
      <circle cx="5" cy="10" r="4.500" fill="#8a8a8a" />
      <circle cx="9" cy="6" r="3.500" fill="#dcdcdc" />
      <circle cx="4" cy="9" r="2.200" fill="#d0d0d0" />
      <Tick x={12} y={13} />
    </>,
    <>
      <Cube x={0} y={0} s={15} d={4} front="#f2fafd" top="#c9ecf8" side="#a5dcf0" line="#5fafce" />
      <Tick x={12} y={13} />
    </>,
    <>
      <path d="M0.500 6L4 1H11L15 6V13L12 14.500H4Z" fill="#c5e9f6" stroke="#3a8db0" />
      <path d="M11 1L15 6H9Z" fill="#4fa6cb" />
      <path d="M0.500 6H9L11 1M9 6V14M0.500 6L4 14.500" stroke="#3a8db0" />
      <path d="M9.500 9.500H13.500V15H9.500Z" fill="#fff" stroke="#777" />
      <Tick x={12} y={13} />
    </>,
    <>
      <path d="M0.500 0.500H12.500V14.500H0.500Z" fill="#fff" stroke="#999" />
      <path d="M0 3.500H12M0 6.500H12M0 9.500H8M4.500 3V14" stroke="#b0b0b0" />
      <path d="M5 8.500H8L9 7H12L13 8.500H16V16H5Z" fill="#444" />
      <circle cx="10.500" cy="12" r="2.300" fill="#ddd" stroke="#222" />
    </>,
    <>
      <path d="M0.500 4L6 1H15.500L12.500 15L3 12.500Z" fill="#a9d3e4" />
      <path d="M3 12.500L7 8.500L14 10L12.500 15Z" fill="#5d9fbd" />
      <path d="M6 1L7 8.500L3 12.500M7 8.500L14 10" stroke="#86b8cc" />
      <path d="M0.500 4L6 1H15.500L12.500 15L3 12.500ZM0.500 4L11 5.500L15.500 1M11 5.500L12.500 15" stroke="#4088a6" strokeWidth="0.900" />
    </>,
    <>
      <path d="M0.500 4L4 0.500H14.500L0.500 15Z" fill="#d4eff9" stroke="#7cb5cb" strokeWidth="0.800" />
      <path d="M15 1L1 15.500" stroke="#2b6d8d" strokeWidth="1.300" />
      <path d="M14.500 4V14.500H4M12.500 7V14M10.500 9V14M8.500 11V14M6.500 13V14" stroke="#888" strokeDasharray="1 1" />
      <Tick x={12} y={13} />
    </>,
    <>
      <path d="M0 0l4 4M4 0l-4 4M10.500 0L8 5M6.500 8L4 14" stroke="#86662c" strokeWidth="1.300" />
      <path d="M10.500 5V11H15.500M10.500 11L7.500 14.500M9 6.500L10.500 4.500L12 6.500M14 9.500L15.500 11L14 12.500" stroke="#86662c" strokeWidth="1.200" />
      <Tick x={13} y={14} />
    </>,
    <>
      <path d="M-0.500 0.500H8.500V6.500H-0.500Z" fill="#fdf1d2" stroke="#b99b66" />
      <path d="M10 3.500H14V6" stroke="#444" />
      <path d="M11.500 5.500H16.500L14 8.500Z" fill="#444" />
      <path d="M6.500 13Q11 8.500 15.500 13Q11 17.500 6.500 13Z" fill="#fff" stroke="#444" />
      <circle cx="11" cy="12.800" r="1.800" fill="#444" />
    </>,
    <>
      <path d="M3.500 3.500L7 8L3.500 12.500M7 8H13" stroke="#444" strokeWidth="1.200" />
      <circle cx="3" cy="3" r="2.600" fill="#4fae4f" />
      <circle cx="3" cy="13" r="2.600" fill="#2e86b8" />
      <circle cx="13.500" cy="8" r="2.500" fill="#dd6b67" />
    </>,
    <>
      <path d="M8 2L15 14H1Z" stroke="#b5b8ba" strokeWidth="2.400" />
      <path d="M9.500 10.500H15.500V15.500H9.500Z" fill="#9fa2a4" />
      <path d="M8 2V10L3 13" stroke="#c9cbcc" />
    </>,
    <path d="M2.500 2.500H6.500V14H2.500ZM9.500 2.500H13.500V14H9.500Z" fill="#9b9ea0" />,
    <>
      <path d="M-0.500 3H15.500V14H5.500Q10 12 8 9H-0.500Z" fill="#d0d2d3" />
      <path d="M0 3.500H15V13.500H6Q10 11.500 8 8.500H0Z" stroke="#b4b7b9" />
      <path d="M9 6H15V13H8Q12 10 9 6Z" fill="#b4b7b9" />
    </>,
  ];
  return (
    <div className="mt-[7px] ml-[335px] flex h-[32px] w-[422px] items-center border border-[#9da2a5] bg-[#f7f9fc] pl-[2px]">
      {items.map((it, i) => (
        <div key={i} className={`flex w-[26px] items-center justify-center ${i === 12 ? "px-px" : ""}`}>
          <div className={i === 12 ? "border border-[#a8acae] bg-[#dddfe1] p-[3px]" : ""}>
            <svg className="block" width="16" height="16" viewBox="0 0 16 16" fill="none" overflow="visible">
              {it}
            </svg>
          </div>
        </div>
      ))}
    </div>
  );
}

const OPENINGS = [
  "45.700,28 176.300,28 113.700,67.700",
  "26,43.700 91,81.300 26,122",
  "202,40.700 134,79.700 202,118.300",
  "114,90 202,144 202,157.700 178.700,157.700 114,120.700 49.300,155.700 26,155.700 26,141.700",
  "68,173.700 114,144 160,173.700 114,204",
  "26,190 49.300,190 114,227 178.700,190 202,190 202,204.300 114,255 26,203.700",
  "26,231 91,268.300 26,306",
  "202,232 137.700,268.300 202,305",
  "114,282 180,319.700 49,319.700",
];

function FrameModel() {
  return (
    <svg className="mt-[47px] ml-[432px] block" width="228" height="348" viewBox="0 0 228 348" fill="none" shapeRendering="crispEdges">
      <defs>
        <clipPath id="openings">
          {OPENINGS.map((p) => (
            <polygon key={p} points={p} />
          ))}
        </clipPath>
      </defs>
      <rect width="228" height="348" fill="#0000ff" />
      <rect x="7" width="214" height="348" fill="#9facba" />
      <g clipPath="url(#openings)">
        <rect width="228" height="348" fill="#e8eaed" />
        <rect y="28" width="228" height="19" fill="#ff0000" />
        <rect y="46" width="228" height="2" fill="#7a6a00" />
        <rect y="47" width="228" height="7" fill="#00ff00" />
        <rect y="301" width="228" height="20" fill="#ff0000" />
      </g>
      {[14.300, 333.500].map((y) => [44.300, 183.700].map((x) => <circle key={`${x}-${y}`} cx={x} cy={y} r="4.700" fill="#ff0000" />))}
      <rect x="114" y="173" width="15" height="1" fill="#d03048" />
      <rect x="113" y="174" width="1" height="15" fill="#3df2f2" />
      <g shapeRendering="auto">
        <circle cx="114" cy="174" r="3" fill="#2ff02f" />
        <circle cx="129.500" cy="174" r="2" fill="#f03535" />
        <circle cx="114" cy="189.500" r="2" fill="#40f0f0" />
      </g>
    </svg>
  );
}

/* ---------- status bar ---------- */

function StatusBar() {
  return (
    <div className="flex h-[38px] border-t border-[#b7bdc1] bg-[#f7f9fc]">
      <div className="mt-[9px] ml-[6px] flex h-[24px] w-[22px] items-center justify-center border border-[#a9adaf] bg-[#dddfe1]">
        <Ic>
          <path d="M0.500 1.500H15V14.500H0.500Z" fill="#fff" stroke="#777" />
          <path d="M0.500 5H15" stroke="#999" />
          <path d="M0.500 5.500H5V14.500H0.500Z" fill="#b5e6f8" stroke="#14618a" />
          <path d="M7 13Q11.500 8.500 16 13Q11.500 16.500 7 13Z" fill="#fff" stroke="#333" />
          <circle cx="11.500" cy="12.800" r="1.800" fill="#333" />
        </Ic>
      </div>
      <div className="mt-[12px] ml-[7px]">
        <Ic>
          <circle cx="8" cy="8.500" r="6.500" fill="#3b9bce" />
          <path d="M3 7L6 3L9 4L8 8L5 10ZM10 9L13 8L12 12L9 13Z" fill="#bfe6f6" />
          <path d="M2.500 14.500C-2 13 10 -1 14.500 1C17.500 3 9 12 4.500 14" stroke="#666" />
        </Ic>
      </div>
      <div className="mt-[13px] ml-[10px] h-[16px] w-[16px] border border-[#2a7196] bg-linear-to-br from-[#fafdfe] to-[#c9dce4]" />
      <div className="mt-[9px] ml-[12px] h-[24px] w-px bg-[#a9adaf]" />
      <div className="grow" />
      <div className="mt-[3px] h-[30px] w-px bg-[#a9adaf]" />
      <div className="mt-[3px] ml-[4px] h-[30px] w-px bg-[#a9adaf]" />
      <div className="mt-[5px] ml-[2px] flex h-[24px] w-[42px] border border-[#b9bdbf]">
        <div className="flex w-[27px] items-center justify-center border-r border-[#b9bdbf]">
          <Ic w={17} h={16}>
            <path d="M3 1H6.500V4H10V1H13.500L14.500 5L16.500 11V15H11V9H6V15H0.500V11L2.500 5Z" fill="#3d4042" />
            <path d="M4 4L2.500 12M13 4L14.500 12" stroke="#999" strokeWidth="1.400" />
          </Ic>
        </div>
        <div className="flex grow items-center justify-center pb-[1px]">
          <Caret />
        </div>
      </div>
      <div className="mt-[3px] ml-[2px] h-[30px] w-px bg-[#a9adaf]" />
      <div className="mt-[5px] ml-[2px] flex h-[28px] w-[40px] items-center justify-center border border-[#a9adaf]">
        <Ic w={18} h={18}>
          <path d="M0.500 4.500H13.500V17.500H0.500ZM0.500 4.500L4.500 0.500H17.500V13.500L13.500 17.500M13.500 4.500L17.500 0.500" fill="#fff" stroke="#444" />
          <path d="M3 8L5 6V13H11L9.500 15H3Z" fill="#fbd89a" stroke="#d69f4a" strokeWidth="0.800" />
          <Cube x={5} y={6} s={8} d={2} />
        </Ic>
      </div>
      <div className="mt-[7px] mr-[18px] ml-[90px] flex h-[23px] w-[165px] items-center border border-[#a9adaf] bg-[#f9fafb]">
        <span className="grow pl-[7px] tracking-[-0.350px]">Geometry</span>
        <div className="flex h-full w-[15px] items-center justify-center border-l border-[#a9adaf]">
          <Caret />
        </div>
      </div>
    </div>
  );
}

/* ---------- taskbar ---------- */

function TaskItem({ active, dot, children }: { active?: boolean; dot?: boolean } & Kids) {
  return (
    <div className="flex w-[44px] justify-center pt-[4px]">
      <div className={`flex h-[40px] w-[39px] flex-col items-center rounded-[4px] ${active ? "border border-[#463835] bg-[#3b2e2c] pt-[7px]" : "pt-[8px]"}`}>
        <Ic w={24}>{children}</Ic>
        {active && <div className="mt-[4px] h-[3px] w-[16px] shrink-0 rounded-full bg-[#ef8269]" />}
        {dot && <div className="mt-[4px] h-[3px] w-[6px] shrink-0 rounded-full bg-[#9a9492]" />}
      </div>
    </div>
  );
}

function Taskbar() {
  return (
    <div className="flex h-[48px] bg-linear-to-r from-[#1b2322] via-[#301e19] to-[#182124] font-['Noto_Sans'] text-white">
      <div className="flex w-[463px] pl-[19px]">
        <div className="mt-[14px]">
          <Ic w={26} h={18}>
            <defs>
              <linearGradient id="cloud" x1="0" y1="0" x2="0.600" y2="1">
                <stop offset="0" stopColor="#8ea8e0" />
                <stop offset="1" stopColor="#e9effc" />
              </linearGradient>
            </defs>
            <path d="M6 16A5 5 0 0 1 5.500 6.200A7 7 0 0 1 18.500 6A5 5 0 0 1 20 16Z" fill="url(#cloud)" />
          </Ic>
        </div>
        <div className="mt-[9px] ml-[7px] text-[12px] leading-[16px] tracking-[-0.300px]">
          <div>83°F</div>
          <div className="text-[#c3c5c5]">Cloudy</div>
        </div>
      </div>
      <TaskItem>
        <defs>
          <linearGradient id="win" x1="0" y1="0" x2="1" y2="1">
            <stop offset="0" stopColor="#7fdcfb" />
            <stop offset="1" stopColor="#1a9ff0" />
          </linearGradient>
        </defs>
        <path d="M1 1H12V12H1ZM13 1H24V12H13ZM1 13H12V24H1ZM13 13H24V24H13Z" fill="url(#win)" />
      </TaskItem>
      <TaskItem>
        <circle cx="14" cy="10" r="8.500" fill="#454443" stroke="#e4e4e4" strokeWidth="2.200" />
        <path d="M8 16L2.500 22" stroke="#e4e4e4" strokeWidth="2.800" strokeLinecap="round" />
      </TaskItem>
      <TaskItem>
        <path d="M8 1H24V17H8Z" fill="#f1f0f0" />
        <path d="M0 7H18V23H0Z" fill="#6d6b6a" />
        <path d="M8 7H18V17H8Z" fill="#a5a4a3" />
      </TaskItem>
      <TaskItem>
        <defs>
          <linearGradient id="chat" x1="0" y1="0" x2="1" y2="1">
            <stop offset="0" stopColor="#9585b0" />
            <stop offset="1" stopColor="#5050c8" />
          </linearGradient>
        </defs>
        <path d="M12.500 1A11.500 11.500 0 1 1 7 22.500L1 24L2.500 18A11.500 11.500 0 0 1 12.500 1Z" fill="url(#chat)" />
        <rect x="6" y="7" width="9" height="10" rx="1.500" fill="#fff" />
        <path d="M16 10L19.500 7.500V16.500L16 14Z" fill="#fff" />
      </TaskItem>
      <TaskItem dot>
        <path d="M0 3Q0 1 2 1H8L10.500 4H24V10H0Z" fill="#d9980d" />
        <path d="M0 6H9L11 4H22Q24 4 24 6V22H0Z" fill="#fdd04e" />
        <path d="M4 22V18Q4 16 6 16H18Q20 16 20 18V22Z" fill="#1372b8" />
      </TaskItem>
      <TaskItem>
        <defs>
          <linearGradient id="edge" x1="0" y1="0.500" x2="1" y2="0.300">
            <stop offset="0" stopColor="#1f95dc" />
            <stop offset="0.500" stopColor="#2fb5d8" />
            <stop offset="1" stopColor="#66d95f" />
          </linearGradient>
        </defs>
        <circle cx="12.500" cy="12" r="12" fill="#1575c4" />
        <path d="M0.500 12A12 12 0 0 1 24.500 11C24.500 16 20.500 17 17.500 17C14.500 17 14 15.500 15 14C17 10 13 7 9 7C5 7 1.500 9 0.500 12Z" fill="url(#edge)" />
        <path d="M9 10C6 16 10 21 18 21.500C20 21 22 19 22.500 17.500C18 20 12 19 11.500 14C11.500 12 13 11 13.500 10.500C12 9 10 9 9 10Z" fill="#0f4f96" />
        <path d="M15 14C17 11 14.500 9 12.500 9.500C11 11 11 13.500 13 16C16 18 21 17.500 24 14.500L22.500 17.500C19 18.500 14 17.500 15 14Z" fill="#241d1b" />
      </TaskItem>
      <TaskItem>
        <path d="M7.500 6V3Q7.500 1.500 9 1.500H16Q17.500 1.500 17.500 3V6" stroke="#35a9e1" strokeWidth="2" />
        <path d="M1 5.500H24V21Q24 24 21 24H4Q1 24 1 21Z" fill="#f1f1f1" />
        <path d="M8 10H12V14H8Z" fill="#e84b2c" />
        <path d="M13 10H17V14H13Z" fill="#6fb62c" />
        <path d="M8 15H12V19H8Z" fill="#2e9fe0" />
        <path d="M13 15H17V19H13Z" fill="#f6b313" />
      </TaskItem>
      <TaskItem active>
        <path d="M0 0H24V24H0Z" fill="#f5f5f5" />
        <path d="M1.500 1.500H22.500V22.500H1.500Z" fill="#fff" stroke="#a5a5a5" />
        <path d="M4 4H9V15H20V20H4Z" fill="#c6ccd0" stroke="#7c868b" />
        <path d="M9.500 4H20V15H9.500Z" fill="#1697d6" stroke="#0c6ea3" />
      </TaskItem>
      <TaskItem dot>
        <path d="M5 1H23V20L19 23H2V4Z" fill="#1f6fe8" />
        <path d="M17.500 7.500H13A4.500 4.500 0 0 0 13 16.500H17.500" stroke="#fff" strokeWidth="3" />
      </TaskItem>
      <TaskItem dot>
        <path d="M13 1C19 1 24 5 24 10C24 14 21 14 19 14C15 14 18 22 12 22C6 22 2 17 2 12C2 6 7 1 13 1Z" fill="#2fb0e6" />
        <circle cx="9.500" cy="6.500" r="2" fill="#5fc75a" />
        <circle cx="14" cy="5" r="2" fill="#f6c443" />
        <circle cx="6" cy="13" r="2" fill="#e0653b" />
        <circle cx="13" cy="13" r="1.700" fill="#17435c" />
        <path d="M17 8H22V13H17Z" fill="#d9dcdd" />
        <path d="M18 13H21V22L19.500 24L18 22Z" fill="#b0672c" />
      </TaskItem>
      <div className="grow" />
      <Slot cls="w-[24px]">
        <Ic w={12} h={8}>
          <path d="M0.800 7L6 1.500L11.200 7" stroke="#fff" strokeWidth="1.300" />
        </Ic>
      </Slot>
      <Slot cls="w-[24px]">
        <Ic w={16} h={12}>
          <path d="M4 11A3.500 3.500 0 0 1 3 4.500A5 5 0 0 1 12 4.500A3.300 3.300 0 0 1 13 11Z" fill="#f4f4f4" />
          <path d="M3 4.500A5 5 0 0 1 12 4.500L6 7.500Z" fill="#bbb" />
        </Ic>
      </Slot>
      <Slot cls="w-[24px]">
        <Ic w={16} h={16}>
          <path d="M7.500 0L14 2.500V8Q13 13 7.500 15Q1.500 13 0.500 8V2.500Z" fill="#2196e6" />
          <path d="M7.500 0V15Q1.500 13 0.500 8V2.500Z" fill="#46b4f5" />
          <circle cx="10.800" cy="11.200" r="4.700" fill="#16863a" />
          <path d="M8.800 11.200L10.300 12.700L13.100 9.700" stroke="#fff" strokeWidth="1.200" />
        </Ic>
      </Slot>
      <Slot cls="ml-[4px] w-[24px]">
        <Ic w={16} h={14}>
          <path d="M0.800 5.500A10 10 0 0 1 15.200 5.500M3 8A7 7 0 0 1 13 8M5.300 10.300A4 4 0 0 1 10.700 10.300" stroke="#fff" strokeWidth="1.400" />
          <circle cx="8" cy="12" r="1.400" fill="#fff" />
        </Ic>
      </Slot>
      <Slot cls="w-[24px]">
        <Ic w={16} h={14}>
          <path d="M1 5H4L7.500 1.500V12.500L4 9H1Z" stroke="#fff" strokeWidth="1.200" />
          <path d="M9.500 4.500Q11 7 9.500 9.500" stroke="#fff" strokeWidth="1.200" />
          <path d="M11.500 3Q14 7 11.500 11M13.500 1.500Q16.500 7 13.500 12.500" stroke="#888" />
        </Ic>
      </Slot>
      <Slot cls="w-[24px]">
        <Ic w={16} h={14}>
          <path d="M3.500 8.500V11.500H13.500V3.500H7.500" stroke="#fff" strokeWidth="1.300" />
          <path d="M8 5H12V10H6V8Z" fill="#fff" />
          <path d="M15 6V9.500" stroke="#fff" strokeWidth="1.500" />
          <path d="M1.500 0.500V3M4.500 0.500V3M0.500 3H5.500V5L4 6.500H2L0.500 5ZM3 6.500V9" fill="#fff" stroke="#fff" />
        </Ic>
      </Slot>
      <div className="mt-[8px] w-[61px] text-right text-[12px] leading-[16px] tracking-[-0.250px]">
        <div>1:49 PM</div>
        <div>7/7/2022</div>
      </div>
      <div className="mt-[16px] mr-[20px] ml-[8px] flex h-[16px] w-[16px] items-center justify-center rounded-full bg-[#f1806a] text-[10px] text-[#2a1512]">1</div>
    </div>
  );
}

export default function App() {
  return (
    <div className="flex h-[768px] w-[1366px] flex-col overflow-hidden bg-[#e8eaed] font-['Noto_Sans','Open_Sans',sans-serif] text-[12px] leading-[16px] text-[#3f4447]">
      <TitleBar />
      <TabBar />
      <div className="flex shrink-0 flex-col tracking-[-0.450px]">
        <Ribbon />
      </div>
      <div className="flex min-h-0 grow">
        <TreePanel />
        <div className="min-w-0 grow bg-[#e8eaed]">
          <ViewToolbar />
          <FrameModel />
        </div>
      </div>
      <StatusBar />
      <Taskbar />
    </div>
  );
}
